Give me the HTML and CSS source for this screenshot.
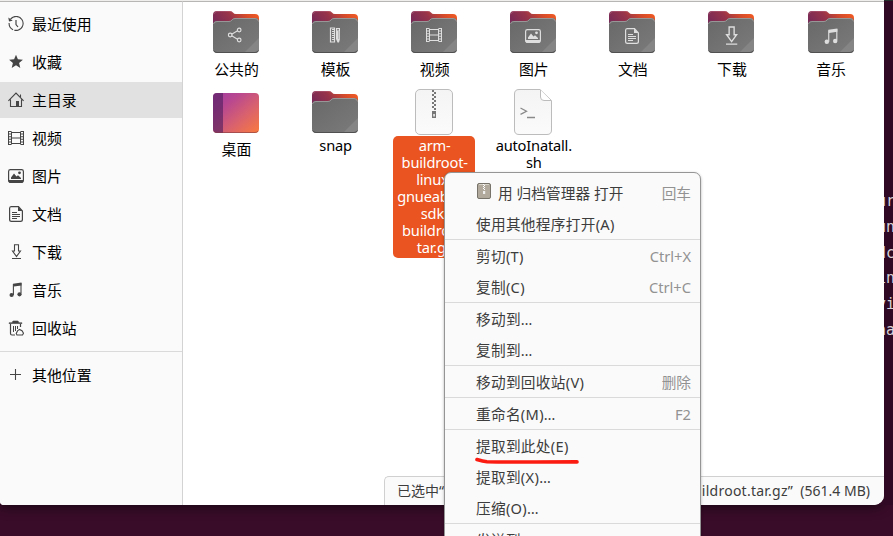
FILE: index.html
```html
<!DOCTYPE html>
<html lang="zh-CN">
<head>
<meta charset="utf-8">
<title>主目录</title>
<link rel="stylesheet" href="styles.css">
</head>
<body>
<svg class="defs" aria-hidden="true">
  <defs>
    <linearGradient id="back" x1="0" y1="0.6" x2="1" y2="0.3"><stop offset="0" stop-color="#762957"/><stop offset=".42" stop-color="#97344a"/><stop offset=".75" stop-color="#d64c2a"/><stop offset="1" stop-color="#f05a24"/></linearGradient>
    <linearGradient id="front" x1="0" y1="0" x2="1" y2="1"><stop offset="0" stop-color="#686868"/><stop offset="1" stop-color="#7b7b7b"/></linearGradient>
    <linearGradient id="desk" x1="0" y1="0" x2="1" y2="1"><stop offset="0.1" stop-color="#a83f9b"/><stop offset=".3" stop-color="#b9488f"/><stop offset=".6" stop-color="#d76070"/><stop offset="1" stop-color="#fa7b3d"/></linearGradient>
    <linearGradient id="paper" x1="0" y1="0" x2="0" y2="1"><stop offset="0" stop-color="#f4f4f4"/><stop offset="1" stop-color="#fbfbfb"/></linearGradient>
    <symbol id="folder" viewBox="0 0 46 43">
      <path d="M0 14V4q0-4 4-4h13q2 0 3 1.500T23 3h19q4 0 4 4v10H0z" fill="url(#back)"/>
      <path d="M1 3q1-2.500 3-2.500h13q2 0 3 1.500" fill="none" stroke="#b76a83" stroke-width=".8" opacity=".6"/>
      <path d="M0 14q0-4 4-4h12q2 0 3-1.500t3-1.500h20q4 0 4 4v27q0 4-4 4H4q-4 0-4-4z" fill="url(#front)"/>
      <path d="M0.500 13q.5-2.500 3.500-2.500h12q2 0 3-1.500t3-1.500h20q3 0 3.500 3" fill="none" stroke="#979797"/>
      <path d="M31 42L46 27v11q0 4-4 4z" fill="#858585"/>
      <path d="M.7 39.500q1 2 3.300 2h38q2.300 0 3.300-2" fill="none" stroke="#505050"/>
    </symbol>
    <symbol id="recent" viewBox="0 0 16 16"><path d="M2.500 3.200A7 7 0 1 1 1.100 7" fill="none" stroke="currentColor" stroke-width="1.100" stroke-dasharray="30 1.300 20"/><path d="M8 4v4.500l2 2.500" fill="none" stroke="currentColor" stroke-width="1.200"/><path d="M.3 1.500l.7 4 3.700-.8z" fill="currentColor"/></symbol>
    <symbol id="star" viewBox="0 0 16 16"><path d="M8 .7l1.900 4.600 5 .4-3.800 3.300 1.200 4.900L8 11.300l-4.300 2.600 1.200-4.900L1.100 5.700l5-.4z" fill="currentColor"/></symbol>
    <symbol id="home" viewBox="0 0 16 16"><path d="M.4 8.800L8 1l7.600 7.800M2.500 7.500v7h11v-7M12.500 5V2.500" fill="none" stroke="currentColor" stroke-width="1.100"/><path d="M8 9h3v6H8z" fill="currentColor"/></symbol>
    <symbol id="video" viewBox="0 0 16 16"><path d="M.5 1v14M3.500 1.500v13M12.500 1.500v13M15.500 1v14M3.500 2.500h9M3.500 8h9M3.500 13.500h9" fill="none" stroke="currentColor"/><path d="M2 1v14M14 1v14" stroke="currentColor" stroke-width="2.400" stroke-dasharray="1 1.600" fill="none"/></symbol>
    <symbol id="image" viewBox="0 0 16 16"><rect x=".6" y="1.600" width="14.800" height="12.800" rx="1.800" fill="none" stroke="currentColor" stroke-width="1.200"/><path d="M.7 12h14.600v1.500q0 1.400-1.500 1.400H2.200q-1.500 0-1.500-1.400z" fill="currentColor"/><path d="M3 11V9.500L6 5.500l2.500 3 1.500-1.200 3 2.700v1z" fill="currentColor"/><circle cx="11.500" cy="4.800" r="1.400" fill="currentColor"/></symbol>
    <symbol id="doc" viewBox="0 0 16 16"><path d="M3 .6h7.500L14.400 5v8.500q0 1.900-1.900 1.900h-9q-1.900 0-1.900-1.900v-11Q1.600.6 3 .6z" fill="none" stroke="currentColor" stroke-width="1.200"/><path d="M10 .5V5h4.500z" fill="currentColor"/><path d="M4 6.500h5M4 8.500h8M4 10.500h8M4 12.500h5" stroke="currentColor"/></symbol>
    <symbol id="down" viewBox="0 0 16 16"><path d="M6.500.8h4V7h2L8.500 12.500 4.500 7h2z" fill="none" stroke="currentColor" stroke-width="1.100"/><path d="M4 14.500h9" stroke="currentColor"/></symbol>
    <symbol id="music" viewBox="0 0 16 16"><path d="M5 1.700L13.500.5v3L5.800 4.600z" fill="currentColor"/><path d="M5.400 2v11M13 1v10.500" stroke="currentColor" stroke-width="1.100"/><circle cx="3.600" cy="13" r="2.100" fill="currentColor"/><circle cx="11.500" cy="12.300" r="2.100" fill="currentColor"/></symbol>
    <symbol id="trash" viewBox="0 0 16 16"><path d="M1 3.500h13V2.800h-3L10 1H5L4 2.800H1z" fill="currentColor" stroke="currentColor" stroke-width=".6"/><path d="M2.500 4v9.500q0 1.500 1.500 1.500h3M12.500 4v3" fill="none" stroke="currentColor" stroke-width="1.200"/><path d="M5.500 6v6M7.500 6v5M9.500 6v3" stroke="currentColor"/><path d="M9 15h5.500l1-1.800-1.500-2.500-2.500-1.300-2 1.500-1.300 2.500z" fill="none" stroke="currentColor" stroke-width="1.100"/></symbol>
    <symbol id="plus" viewBox="0 0 16 16"><path d="M2 7.500h11M7.500 2v11" stroke="currentColor" stroke-width="1.100"/></symbol>
    <symbol id="share" viewBox="0 0 16 16"><path d="M4.700 7.200L10.500 3.800M4.700 8.800L10.500 12.200" stroke="currentColor" stroke-width="1.100"/><g fill="none" stroke="currentColor" stroke-width="1.200"><circle cx="3.200" cy="8" r="1.800"/><circle cx="12.200" cy="3" r="1.800"/><circle cx="12.200" cy="13" r="1.800"/></g></symbol>
    <symbol id="ruler" viewBox="0 0 16 16"><path d="M3.500 1h4v14h-4z" fill="none" stroke="currentColor" stroke-width="1.200"/><path d="M6 2v12" stroke="currentColor" stroke-width="2" stroke-dasharray="1 1"/><path d="M9 1h4v11l-1 3.500h-1.500L9 12zM10.300 2v1.500h1.500V2z" fill="currentColor" fill-rule="evenodd"/><path d="M11.800 4v8" stroke="#888" stroke-width=".6"/></symbol>
  </defs>
</svg>

<div class="terminal" aria-hidden="true">
  <div class="lines"><span>ur</span><span>un</span><span>dc</span><span>in</span><span>vi</span><span>na</span></div>
</div>

<div class="window">
  <nav class="sidebar">
    <div class="place"><svg><use href="#recent"/></svg><span>最近使用</span></div>
    <div class="place"><svg><use href="#star"/></svg><span>收藏</span></div>
    <div class="place active"><svg><use href="#home"/></svg><span>主目录</span></div>
    <div class="place"><svg><use href="#video"/></svg><span>视频</span></div>
    <div class="place"><svg><use href="#image"/></svg><span>图片</span></div>
    <div class="place"><svg><use href="#doc"/></svg><span>文档</span></div>
    <div class="place"><svg><use href="#down"/></svg><span>下载</span></div>
    <div class="place"><svg><use href="#music"/></svg><span>音乐</span></div>
    <div class="place"><svg><use href="#trash"/></svg><span>回收站</span></div>
    <hr>
    <div class="place"><svg><use href="#plus"/></svg><span>其他位置</span></div>
  </nav>

  <main class="content">
    <div class="files">
      <div class="file"><svg class="icon" viewBox="0 0 48 48"><use href="#folder" x="1" y="3" width="46" height="43"/><use class="emblem" href="#share" x="15" y="19" width="16" height="16"/></svg><div class="name">公共的</div></div>
      <div class="file"><svg class="icon" viewBox="0 0 48 48"><use href="#folder" x="1" y="3" width="46" height="43"/><use class="emblem" href="#ruler" x="16" y="19" width="16" height="16"/></svg><div class="name">模板</div></div>
      <div class="file"><svg class="icon" viewBox="0 0 48 48"><use href="#folder" x="1" y="3" width="46" height="43"/><use class="emblem" href="#video" x="16" y="19" width="16" height="16"/></svg><div class="name">视频</div></div>
      <div class="file"><svg class="icon" viewBox="0 0 48 48"><use href="#folder" x="1" y="3" width="46" height="43"/><use class="emblem" href="#image" x="16" y="20" width="16" height="16"/></svg><div class="name">图片</div></div>
      <div class="file"><svg class="icon" viewBox="0 0 48 48"><use href="#folder" x="1" y="3" width="46" height="43"/><use class="emblem" href="#doc" x="16" y="20" width="16" height="16"/></svg><div class="name">文档</div></div>
      <div class="file"><svg class="icon" viewBox="0 0 48 48"><use href="#folder" x="1" y="3" width="46" height="43"/><use class="emblem" href="#down" x="14" y="18" width="20" height="20"/></svg><div class="name">下载</div></div>
      <div class="file"><svg class="icon" viewBox="0 0 48 48"><use href="#folder" x="1" y="3" width="46" height="43"/><use class="emblem" href="#music" x="16" y="20" width="17" height="17"/></svg><div class="name">音乐</div></div>

      <div class="file"><svg class="icon" viewBox="0 0 48 48"><rect x="1" y="5" width="46" height="40" rx="4" fill="url(#desk)"/><path d="M5 5h6v40H5q-4 0-4-4V9q0-4 4-4z" fill="#54205f" opacity=".65"/><path d="M2 43q1 1.500 3 1.500h38q2 0 3-1.500" fill="none" stroke="#803c45" opacity=".6"/></svg><div class="name">桌面</div></div>
      <div class="file"><svg class="icon" viewBox="0 0 48 48"><use href="#folder" x="1" y="3" width="46" height="43"/></svg><div class="name latin">snap</div></div>
      <div class="file selected"><svg class="icon" viewBox="0 0 48 48"><rect x="5.500" y="1.500" width="37" height="45" rx="4.500" fill="url(#paper)" stroke="#bcbcbc"/><path d="M23 2v20" stroke="#777" stroke-width="2" stroke-dasharray="2 2"/><path d="M25 4v18" stroke="#777" stroke-width="2" stroke-dasharray="2 2"/><path d="M22 23h4v7h-4zM23.300 26v2.500h1.500V26z" fill="#777" fill-rule="evenodd"/></svg><div class="name latin">arm-<br>buildroot-<br>linux-<br>gnueabihf_<br>sdk-<br>buildroot.<br>tar.gz</div></div>
      <div class="file"><svg class="icon" viewBox="0 0 48 48"><path d="M10 1.500h21l11.500 11V42q0 4.500-4.500 4.500H10q-4.500 0-4.500-4.500V6q0-4.500 4.500-4.500z" fill="url(#paper)" stroke="#bcbcbc"/><path d="M31.500 2v7q0 3.500 3.500 3.500h7" fill="#fff" stroke="#bcbcbc"/><path d="M11.500 20l6 3.200-6 3.200M18 29.500h8" fill="none" stroke="#8a8a8a" stroke-width="1.300"/></svg><div class="name latin">autoInatall.<br>sh</div></div>
    </div>
    <footer class="status"><span>已选中“arm-buildroot</span><span><span class="archive">buildroot.tar.gz”</span> &nbsp;(561.4 MB)</span></footer>
  </main>
</div>

<div class="menu">
  <div class="item open"><svg class="app" viewBox="0 0 14 16"><rect x=".5" y=".5" width="13" height="15" rx="1.500" fill="#b1aa9c" stroke="#77736a"/><path d="M2 1.500h10" stroke="#d8d4c9"/><path d="M6.500 1v6M7.500 2v6" stroke="#fff" stroke-dasharray="1 1"/><path d="M6 8h2.200v3H6z" fill="#eee"/></svg><span>用 归档管理器 打开</span><kbd>回车</kbd></div>
  <div class="item"><span>使用其他程序打开(A)</span></div>
  <hr>
  <div class="item"><span>剪切(T)</span><kbd>Ctrl+X</kbd></div>
  <div class="item"><span>复制(C)</span><kbd>Ctrl+C</kbd></div>
  <hr>
  <div class="item"><span>移动到…</span></div>
  <div class="item"><span>复制到…</span></div>
  <hr>
  <div class="item"><span>移动到回收站(V)</span><kbd>删除</kbd></div>
  <hr>
  <div class="item"><span>重命名(M)…</span><kbd>F2</kbd></div>
  <hr>
  <div class="item marked"><span>提取到此处(E)</span><svg class="stroke" viewBox="0 0 104 8"><path d="M2 2.500q6 2 10 2.200 30 .5 90 .2" fill="none" stroke="#fb1b10" stroke-width="3.600" stroke-linecap="round"/></svg></div>
  <div class="item"><span>提取到(X)…</span></div>
  <div class="item"><span>压缩(O)…</span></div>
  <hr>
  <div class="item"><span>发送到…</span></div>
</div>
</body>
</html>
```

FILE: styles.css
```css
* { box-sizing: border-box; }

body {
  margin: 0;
  width: 893px;
  height: 536px;
  overflow: hidden;
  position: relative;
  background: #390c29;
  color: #000;
  font: 14.67px/22px "Noto Sans", "Noto Sans CJK SC", sans-serif;
}

.defs { position: absolute; width: 0; height: 0; }
svg { display: block; flex: none; }
hr { margin: 0; border: 0; height: 1px; background: #dadada; }

/* terminal behind the file manager */
.terminal {
  position: absolute;
  inset: 0 0 auto auto;
  width: 16px;
  height: 505px;
  padding-top: 188px;
  overflow: hidden;
  background: #300a24;
  border-top: 1px solid #232d29;
}
.lines {
  display: flex;
  flex-direction: column;
  color: #d8d2d6;
  font: 15px/25.8px "DejaVu Sans Mono", monospace;
}

.window {
  position: relative;
  display: flex;
  width: 884px;
  height: 505px;
  border-top: 1px solid #efeeed;
  border-radius: 0 0 10px 4px;
  overflow: hidden;
  background: #fff;
}
body::before {
  content: "";
  position: absolute;
  width: 884px;
  height: 505px;
  border-radius: 0 0 10px 4px;
  box-shadow: 0 2px 12px rgba(0, 0, 0, .6);
}

.sidebar,
.content { border-top: 1px solid #b8b6b4; }

.sidebar {
  display: flex;
  flex-direction: column;
  gap: 2px;
  width: 183px;
  padding-top: 4px;
  background: #fafafa;
  border-right: 1px solid #d3d3d3;
  font-size: 14.9px;
}
.sidebar hr { margin: 3px 0; }
.place {
  display: flex;
  align-items: center;
  gap: 8px;
  height: 36px;
  padding-left: 8px;
}
.place svg { width: 16px; height: 16px; color: #454545; }
.place.active { background: #e1e1e1; }

.content {
  flex: 1;
  display: flex;
  flex-direction: column;
  justify-content: space-between;
  min-width: 0;
}
.files {
  display: grid;
  grid-template-columns: repeat(7, 82px);
  grid-template-rows: 80px auto;
  column-gap: 17.1px;
  align-items: start;
  padding: 6px 0 0 12px;
}
.file {
  display: flex;
  flex-direction: column;
  align-items: center;
}
.icon { width: 48px; height: 48px; }
.emblem { color: #dedede; }
.name {
  width: 82px;
  padding: 1px 0 2px 1px;
  font-size: 14.9px;
  line-height: 25px;
  text-align: center;
  white-space: nowrap;
}
.latin {
  font-size: 14.67px;
  line-height: 17px;
  letter-spacing: -.2px;
}
.selected .name {
  background: #e95420;
  color: #fff;
  border-radius: 5px;
}

.status {
  align-self: flex-end;
  display: flex;
  justify-content: space-between;
  width: 500px;
  height: 29px;
  padding: 3px 14px 0 12px;
  background: #fafafa;
  border: 1px solid #d0d0d0;
  border-width: 1px 0 0 1px;
  border-radius: 5px 0 0;
  color: #3d3d3d;
  font-size: 14px;
}
.archive { letter-spacing: .25px; }

.menu {
  position: absolute;
  left: 444px;
  top: 172px;
  width: 257px;
  height: 380px;
  padding-top: 4px;
  background: #fafafa;
  border: 1px solid #959595;
  border-radius: 7px 7px 0 0;
  box-shadow: 0 1px 3px rgba(0, 0, 0, .3);
  color: #3d3d3d;
}
.item {
  display: flex;
  align-items: center;
  height: 31px;
  padding: 0 9px 0 31px;
  letter-spacing: .3px;
}
.item.open { letter-spacing: .05px; }
.app { width: 14px; height: 16px; margin: -3px 7px 0 1px; }
.item kbd {
  margin-left: auto;
  color: #929292;
  font: inherit;
  letter-spacing: 0;
}
.marked { position: relative; }
.stroke {
  position: absolute;
  left: 30px;
  top: 27px;
  width: 104px;
  height: 8px;
}
```
